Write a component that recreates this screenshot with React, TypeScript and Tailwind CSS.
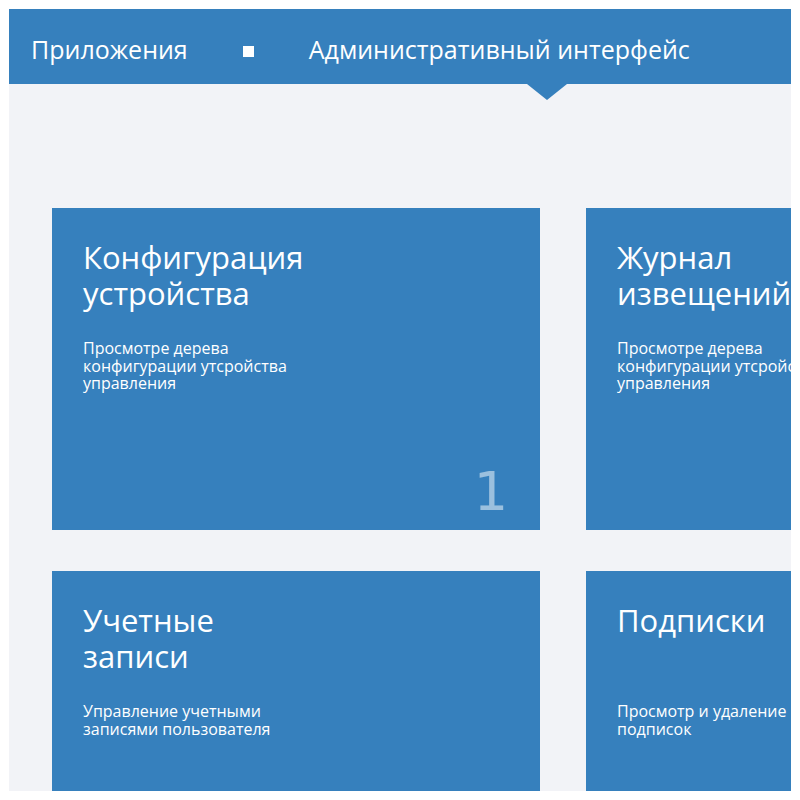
import React from "react";

const cards = [
  {
    title: ["Конфигурация", "устройства"],
    desc: "Просмотре дерева конфигурации утсройства управления",
    badge: "1",
  },
  {
    title: ["Журнал", "извещений"],
    desc: "Просмотре дерева конфигурации утсройства управления",
  },
  {
    title: ["Учетные", "записи"],
    desc: "Управление учетными записями пользователя",
  },
  {
    title: ["Подписки"],
    desc: "Просмотр и удаление подписок",
  },
];

export default function App() {
  return (
    <div className="bg-white p-[9px] h-[800px] w-[800px]" style={{ fontFamily: '"Open Sans", "Noto Sans", sans-serif' }}>
      <div className="h-[782px] w-[782px] bg-[#f2f3f7] overflow-hidden flex flex-col">
        <header className="relative h-[75px] shrink-0 bg-[#3680bd] flex items-start pt-[22px] pl-[22px] text-white text-[25px] leading-[36px]">
          <span>Приложения</span>
          <span className="ml-[55px] mt-[15px] w-[11px] h-[11px] bg-white" />
          <span className="ml-[55px]">Административный интерфейс</span>
          <span className="absolute left-[518px] top-[75px] w-0 h-0 border-l-[20px] border-r-[20px] border-t-[16px] border-l-transparent border-r-transparent border-t-[#3680bd]" />
        </header>
        <main className="pt-[124px] pl-[43px]">
          <div className="grid grid-cols-[488px_488px] auto-rows-[322px] gap-x-[46px] gap-y-[41px] w-max">
            {cards.map((c, i) => (
              <div key={i} className="relative bg-[#3680bd] text-white px-[31px] pt-[31px]">
                <div className="h-[72px] text-[31px] leading-[36px]">
                  {c.title.map((t, j) => (
                    <div key={j}>{t}</div>
                  ))}
                </div>
                <p className="mt-[29px] w-[230px] text-[16px] leading-[17.5px]">{c.desc}</p>
                {c.badge && (
                  <span
                    className="absolute right-[32px] bottom-[11px] text-[54px] leading-none text-white/50"
                    style={{ fontFamily: '"DejaVu Sans", sans-serif' }}
                  >
                    {c.badge}
                  </span>
                )}
              </div>
            ))}
          </div>
        </main>
      </div>
    </div>
  );
}
